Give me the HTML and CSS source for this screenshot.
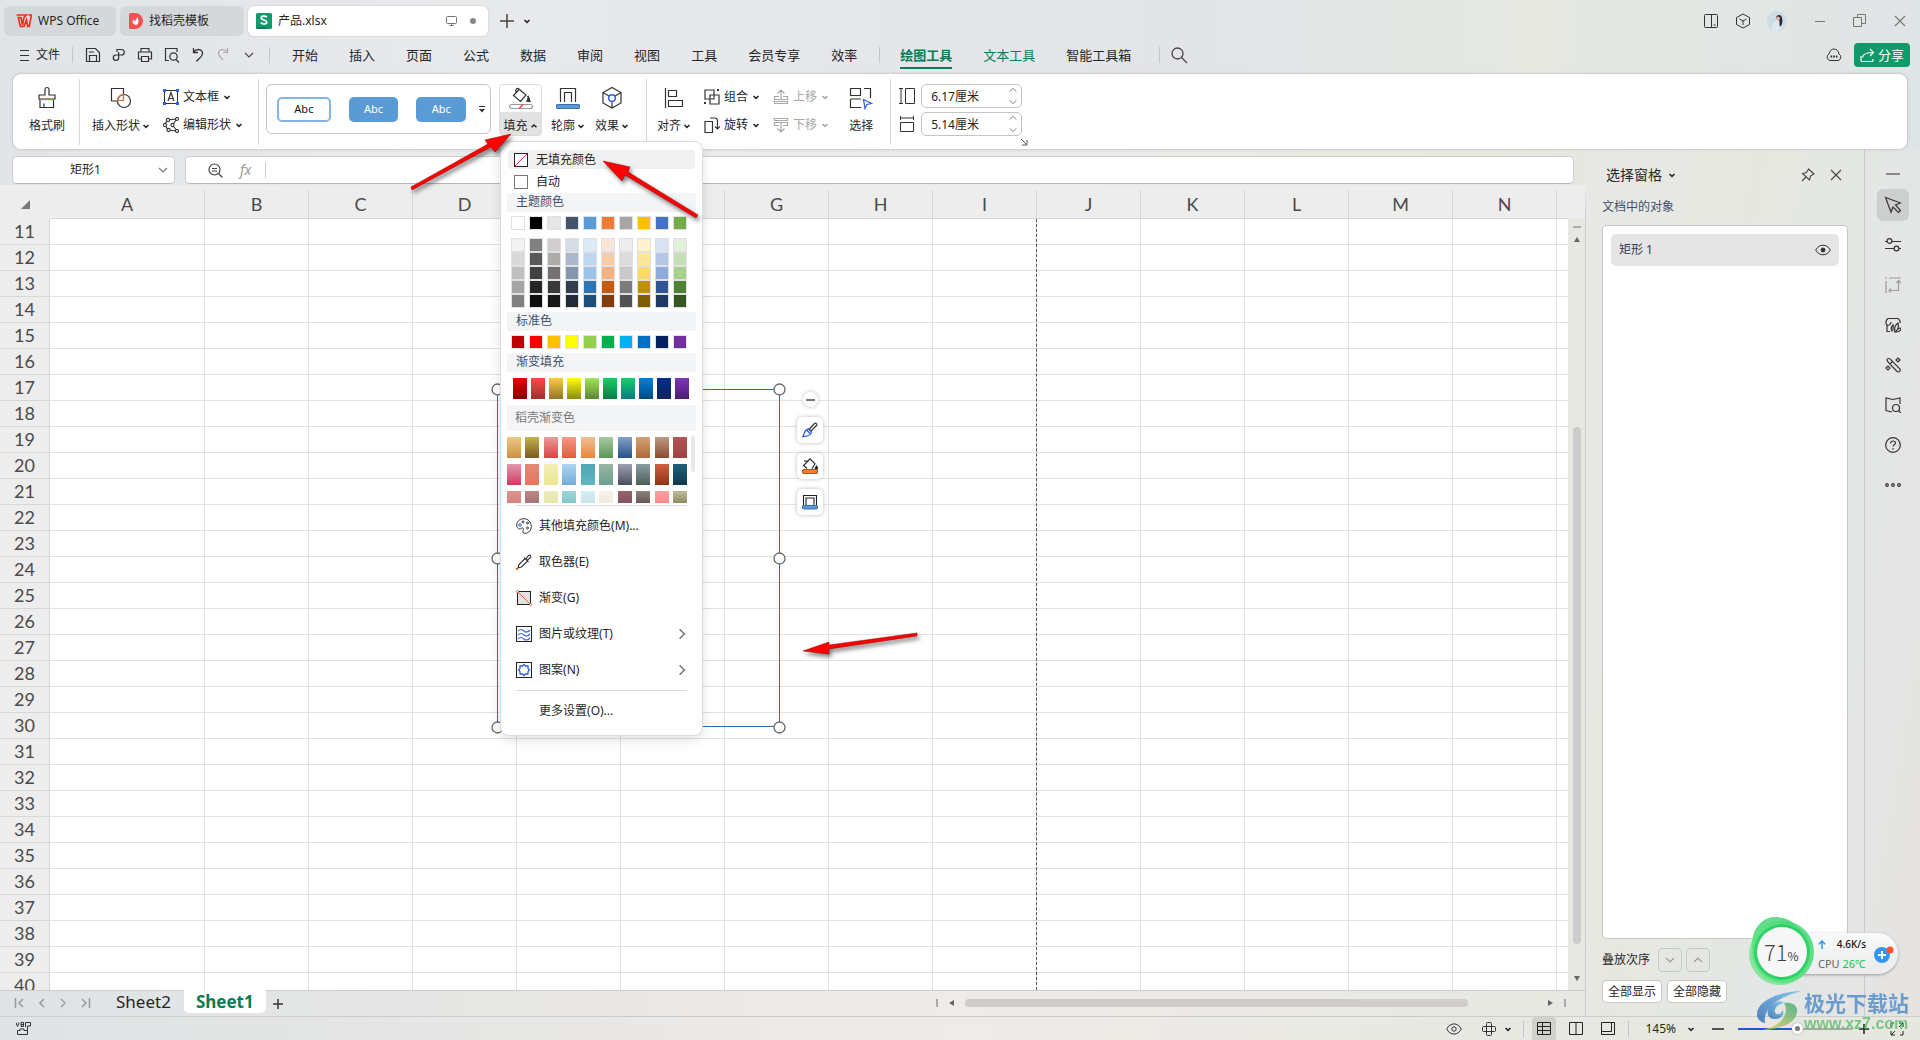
FILE: index.html
```html
<!DOCTYPE html>
<html lang="zh-CN">
<head>
<meta charset="utf-8">
<title>产品.xlsx - WPS Office</title>
<link rel="stylesheet" href="styles.css">
</head>
<body>
<svg class="sprite" aria-hidden="true">
  <symbol id="down" viewBox="0 0 8 8"><path d="M1.5 3 4 5.4 6.500 3" fill="none" stroke="currentColor" stroke-width="1.5"/></symbol>
  <symbol id="up" viewBox="0 0 8 8"><path d="M1.5 5.300 4 3 6.500 5.300" fill="none" stroke="currentColor" stroke-width="1.5"/></symbol>
  <symbol id="wide-down" viewBox="0 0 10 10"><path d="M1 3 5 7 9 3" fill="none" stroke="currentColor" stroke-width="1.1"/></symbol>
  <symbol id="wide-up" viewBox="0 0 10 10"><path d="M1 7 5 3 9 7" fill="none" stroke="currentColor" stroke-width="1.1"/></symbol>
  <symbol id="left" viewBox="0 0 10 10"><path d="M7 1 3 5 7 9" fill="none" stroke="currentColor" stroke-width="1.5"/></symbol>
  <symbol id="right" viewBox="0 0 10 10"><path d="M3 1 7 5 3 9" fill="none" stroke="currentColor" stroke-width="1.3"/></symbol>
  <symbol id="close" viewBox="0 0 12 12"><path d="M1 1 11 11M11 1 1 11" fill="none" stroke="currentColor" stroke-width="1.1"/></symbol>
</svg>

<header class="titlebar">
  <button class="tab tab-home"><svg width="16" height="14" viewBox="0 0 16 14"><path d="M.5 1h10L8 3.500 6.500 11 5 3.500H2.300L4.300 12.500H8L10.500 6l1.200 6.500h1.500L15.500 1h-3" fill="none" stroke="#ee2f1f" stroke-width="1.700"/></svg>WPS Office</button>
  <button class="tab tab-docer"><svg width="14" height="16" viewBox="0 0 14 16"><path d="M1 0h5a8 8 0 0 1 0 16H1a1 1 0 0 1-1-1V1a1 1 0 0 1 1-1z" fill="#f25352"/><path d="M7 12C3 11 3 8 4.500 6.500L6 8.500 8.500 4C10 8 10 11 7 12z" fill="#fff"/></svg>找稻壳模板</button>
  <button class="tab tab-file"><svg width="16" height="16" viewBox="0 0 16 16"><rect width="16" height="16" rx="1.500" fill="#12996a"/><path d="M0 14h11l-2 2H1z" fill="#0b7b54"/><path d="M11 4.200C9 2.400 5 2.900 5.200 5.200 5.400 7.300 10.600 6.700 10.700 9c.1 2.400-4 2.500-6 .6" fill="none" stroke="#fff" stroke-width="1.800"/></svg><span class="grow">产品.xlsx</span>
    <svg width="12" height="12" viewBox="0 0 12 12" fill="none" stroke="#777"><rect x=".5" y="1.500" width="10" height="7" rx="1"/><path d="M5.500 8.500v2M3.500 10.500h4"/></svg><i class="dot"></i></button>
  <button class="plain new-tab" aria-label="新建"><svg width="14" height="14" viewBox="0 0 14 14"><path d="M7 0v14M0 7h14" stroke="#444" stroke-width="1.500"/></svg></button>
  <svg class="i8"><use href="#down"/></svg>
  <div class="window-tools">
    <svg width="16" height="16" viewBox="0 0 16 16" fill="none" stroke="#333"><rect x="1.500" y="1.500" width="13" height="13" rx="1"/><path d="M8.500 2v12M10.500 12h2"/></svg>
    <svg width="16" height="16" viewBox="0 0 16 16" fill="none" stroke="#333"><path d="M8 1l6.500 3.500v7L8 15l-6.500-3.500v-7zM4.500 6 8 8l3.500-2M8 8v4"/></svg>
    <svg width="20" height="20" viewBox="0 0 20 20"><circle cx="10" cy="10" r="10" fill="#cbdde6"/><path d="M5 19c0-6 2-9 5-9 4 0 4 3 5 6-2 4-7 4-10 3z" fill="#dcebf2"/><path d="M9 7c0-4 6-4 6 0 1 4 0 7-2 9-1-2 0-5-1-7z" fill="#2c2833"/><circle cx="11" cy="7.500" r="2" fill="#e5b3a0"/></svg>
    <svg width="10" height="12" viewBox="0 0 10 12"><path d="M0 6.500h10" stroke="#777"/></svg>
    <svg width="13" height="13" viewBox="0 0 13 13" fill="none" stroke="#777"><path d="M.5 3.500h8v9h-8zM4.500 3V.5h8v9H9"/></svg>
    <svg width="12" height="12" color="#777"><use href="#close"/></svg>
  </div>
</header>

<nav class="menubar">
  <button class="plain file-menu"><svg width="9" height="12" viewBox="0 0 9 12"><path d="M0 1.500h9M0 6.500h9M0 11.500h9" stroke="#333"/></svg>文件</button>
  <i class="vline"></i>
  <div class="quick">
    <svg width="16" height="16" viewBox="0 0 16 16" fill="none" stroke="#333" stroke-width="1.200"><path d="M1.500 1.500h9l4 4v9h-13zM4.500 14V8.500h7V14M4 5h5"/></svg>
    <svg width="14" height="16" viewBox="0 0 14 16" fill="none" stroke="#333" stroke-width="1.200"><path d="M5 5V2.500h4.500a2.500 2.500 0 0 1 0 5.500H4a2.700 2.700 0 1 0 2.700 2.700V5"/></svg>
    <svg width="16" height="16" viewBox="0 0 16 16" fill="none" stroke="#333" stroke-width="1.200"><path d="M4 5V1.500h8V5M4 12H1.500V5h13v7H12M4.500 9.500h7v5h-7z"/></svg>
    <svg width="16" height="16" viewBox="0 0 16 16" fill="none" stroke="#333" stroke-width="1.200"><path d="M5 13.500H1.500v-12H13V5"/><circle cx="9.500" cy="9.500" r="3.700"/><path d="M12 12.500 15 15.500"/></svg>
    <svg width="14" height="16" viewBox="0 0 14 16" fill="none" stroke="#333" stroke-width="1.300"><path d="M2.500 1v4.500H7M2.500 5C6 1 11.500 2 11.500 6.500 11.500 10 8 11 5.500 14.500"/></svg>
    <svg width="14" height="16" viewBox="0 0 14 16" fill="none" stroke="#aaa" stroke-width="1.200"><path d="M11.500 1v4.500H7M11.500 5C8 1 2.500 2 2.500 6.500 2.500 9 5 10.500 7 13"/></svg>
    <svg class="quick-more" width="10" height="10" color="#444"><use href="#wide-down"/></svg>
  </div>
  <i class="vline"></i>
  <div class="menus">
    <a href="#">开始</a><a href="#">插入</a><a href="#">页面</a><a href="#">公式</a><a href="#">数据</a><a href="#">审阅</a><a href="#">视图</a><a href="#">工具</a><a href="#">会员专享</a><a href="#">效率</a>
  </div>
  <i class="vline"></i>
  <div class="menus tool-menus"><a href="#" class="current">绘图工具</a><a href="#" class="green">文本工具</a><a href="#">智能工具箱</a></div>
  <i class="vline search-line"></i>
  <svg width="17" height="17" viewBox="0 0 17 17" fill="none" stroke="#444" stroke-width="1.300"><circle cx="6.500" cy="6.500" r="5.500"/><path d="M10.500 10.500 16 16"/></svg>
  <span class="grow"></span>
  <svg width="16" height="14" viewBox="0 0 16 14" fill="none" stroke="#333"><path d="M4 12.500a3.500 3.500 0 0 1-1-6.500C3.500 3 5.500 1 8 1s4.500 2 5 5a3.500 3.500 0 0 1-1 6.500z"/><path d="M4.500 8.500h7" stroke-width="2" stroke-dasharray="1.700 1"/></svg>
  <button class="share"><svg width="15" height="15" viewBox="0 0 15 15" fill="none" stroke="#fff" stroke-width="1.200"><path d="M1 8v4.500a1 1 0 0 0 1 1h10a1 1 0 0 0 1-1V11M2.500 9.500C3 6 6 4.500 13 4.500M10 1l3.500 3.500L10 8"/></svg>分享</button>
</nav>

<section class="ribbon">
  <div class="group g-brush">
    <button class="big"><svg width="22" height="24" viewBox="0 0 22 24" fill="none" stroke="#333" stroke-width="1.200"><path d="M9 9V3.500a2 2 0 0 1 4 0V9h6v4H3V9zM4 13v8.500h13.500V13M8 21.500v-4" /><path d="M4 13.500h14" stroke="#d9692a"/></svg><span>格式刷</span></button>
  </div>
  <div class="group g-shape">
    <button class="big"><svg width="24" height="24" viewBox="0 0 24 24" fill="none" stroke="#333" stroke-width="1.200"><path d="M8 15H2.500V2.500h12V8"/><circle cx="15" cy="15" r="6.500"/><path d="M8.500 14.500h6V8.700A6.500 6.500 0 0 0 8.500 14.500z" stroke="#d9692a"/></svg><span>插入形状<svg class="i8"><use href="#down"/></svg></span></button>
    <div class="stack">
      <button class="small"><svg width="16" height="16" viewBox="0 0 16 16" fill="none" stroke="#333"><path d="M3 1.500h10M3 14.500h10M1.500 3v10M14.500 3v10"/><path d="M5 12 8 3.500 11 12M6 9.500h4" stroke-width="1.200"/><path d="M0 0h3v3H0zM13 0h3v3h-3zM0 13h3v3H0zM13 13h3v3h-3z" fill="#2f5fe0" stroke="none"/></svg><span>文本框<svg class="i8"><use href="#down"/></svg></span></button>
      <button class="small"><svg width="16" height="16" viewBox="0 0 16 16" fill="none" stroke="#333" stroke-width="1.100"><path d="M4 3 14 2 9.500 8 14 14 5 13 2 8z"/><g fill="#fff"><circle cx="5" cy="3" r="1.600"/><circle cx="14" cy="2" r="1.500"/><circle cx="2" cy="8" r="1.600"/><circle cx="9.500" cy="8" r="1.600"/><circle cx="5.500" cy="13" r="1.600"/><circle cx="14" cy="14" r="1.500"/></g></svg><span>编辑形状<svg class="i8"><use href="#down"/></svg></span></button>
    </div>
  </div>
  <div class="group g-style">
    <div class="gallery"><button class="style-btn outline">Abc</button><button class="style-btn">Abc</button><button class="style-btn">Abc</button><svg width="8" height="8" viewBox="0 0 8 8"><path d="M1 1.500h6" stroke="#333"/><path d="M1 4h6L4 7.500z" fill="#333"/></svg></div>
    <div class="fill-wrap">
      <button class="big fill-btn"><svg width="24" height="24" viewBox="0 0 24 24" fill="none" stroke="#333" stroke-width="1.200"><path d="M7 7C6 3 8.500 1 10.500 3.500L17 9l-5.500 6.500-7-6L10 3.500M18.500 10c1.500 2 2 4 1.500 6"/><path d="M19.500 11l1.500 4.500h-3z" fill="#333"/><rect x=".5" y="18.500" width="23" height="4" rx="2" stroke="#999" fill="#fff"/><path d="M10 22.500l4-4" stroke="#e33"/></svg><span>填充<svg class="i8"><use href="#up"/></svg></span></button>
      <div class="popup">
        <button class="row no-fill"><svg width="14" height="14" viewBox="0 0 14 14"><rect x=".5" y=".5" width="13" height="13" fill="#fff" stroke="#222"/><path d="M1 13 13 1" stroke="#d8305a"/></svg>无填充颜色</button>
        <label class="row"><input type="checkbox" class="auto-box">自动</label>
        <h3>主题颜色</h3>
        <div class="swatches theme" id="theme"></div>
        <div class="swatches tints" id="tints"></div>
        <h3>标准色</h3>
        <div class="swatches standard" id="standard"></div>
        <h3>渐变填充</h3>
        <div class="swatches gradients" id="gradients"></div>
        <h3 class="docer-head">稻壳渐变色</h3>
        <div class="docer"><div class="docer-grid" id="docer"></div><i class="docer-thumb"></i></div>
        <hr>
        <button class="item"><svg width="16" height="16" viewBox="0 0 16 16" fill="none" stroke="#333"><path d="M8 .7C3 .7.7 4 .7 7c0 4 3.300 4.500 4.300 3.500 2-1.500 3 0 2 2C6 15 8 15.300 9 15.300c4 0 6.300-3.500 6.300-7C15.300 4 12 .7 8 .7z"/><circle cx="7" cy="4" r="1"/><circle cx="11.500" cy="5" r="1"/><circle cx="11.500" cy="10" r="1"/><circle cx="4" cy="7" r="1.300" stroke="#2f5fe0"/></svg>其他填充颜色(M)...</button>
        <button class="item"><svg width="16" height="16" viewBox="0 0 16 16" fill="none" stroke="#333" stroke-width="1.100"><path d="M9 4.500 3 10.500 2 14 5.500 13 11.500 7M8 3.500l4.500 4.500M10 5l2.500-3.500c1.500-1 3 .5 2 2L11 6.500"/><path d="M0 14h2v2H0z" fill="#d9692a" stroke="none"/></svg>取色器(E)</button>
        <button class="item"><svg width="16" height="16" viewBox="0 0 16 16" fill="none" stroke="#222"><rect x="1.500" y="1.500" width="13" height="13" fill="#e2e2e2"/><path d="M1.500 1.500l13 13" stroke="#d9692a"/><circle cx="1.500" cy="1.500" r="1" stroke="#d9692a" fill="#fff"/><circle cx="14.500" cy="14.500" r="1" stroke="#d9692a" fill="#fff"/></svg>渐变(G)</button>
        <button class="item"><svg width="16" height="16" viewBox="0 0 16 16" fill="none" stroke="#222"><rect x=".5" y=".5" width="15" height="15" /><path d="M2 5c2-2 4-2 6 0s4 1 6-1M2 9c2-2 4-2 6 0s4 1 6-1M2 13c2-2 4-2 6 0s4 1 6-1" stroke="#2f5fe0" stroke-width="1.100"/></svg><span class="grow">图片或纹理(T)</span><svg width="12" height="12" color="#777"><use href="#right"/></svg></button>
        <button class="item"><svg width="16" height="16" viewBox="0 0 16 16" fill="none" stroke="#222"><rect x=".5" y=".5" width="15" height="15" /><path d="M8 2.500 9.500 4H12v2.500L13.500 8 12 9.500V12H9.500L8 13.500 6.500 12H4V9.500L2.500 8 4 6.500V4h2.500z" stroke="#2f5fe0" stroke-width="1.300"/></svg><span class="grow">图案(N)</span><svg width="12" height="12" color="#777"><use href="#right"/></svg></button>
        <hr>
        <button class="item more">更多设置(O)...</button>
      </div>
    </div>
    <button class="big narrow"><svg width="24" height="24" viewBox="0 0 24 24" fill="none" stroke="#333" stroke-width="1.200"><path d="M4.500 16V2.500h15V16M8.500 16V6.500h7V16"/><rect x=".5" y="18.500" width="23" height="4" rx="1.500" fill="#5b9bd5" stroke="#3a6ea5"/></svg><span>轮廓<svg class="i8"><use href="#down"/></svg></span></button>
    <button class="big narrow"><svg width="22" height="24" viewBox="0 0 22 24" fill="none" stroke="#333" stroke-width="1.200"><path d="M11 1.500 20 6.500v10.500l-9 5-9-5V6.500zM2 6.500l6 3.500M20 6.500 14 10M11 16v6"/><circle cx="11" cy="12" r="3.300" stroke="#2f5fe0" stroke-width="1.500"/></svg><span>效果<svg class="i8"><use href="#down"/></svg></span></button>
  </div>
  <div class="group g-arrange">
    <button class="big align"><svg width="20" height="24" viewBox="0 0 20 24" fill="none" stroke="#333" stroke-width="1.200"><path d="M1.500 2v20M4.500 4.500h8v6h-8zM4.500 14.500h14v6h-14z"/></svg><span>对齐<svg class="i8"><use href="#down"/></svg></span></button>
    <div class="stack">
      <button class="small"><svg width="16" height="16" viewBox="0 0 16 16" fill="none" stroke="#333" stroke-width="1.200"><path d="M1 1h9v9H1zM6 6h9v9H6z"/><path d="M13 1h2M1 13v2" stroke-width="2"/></svg><span>组合<svg class="i8"><use href="#down"/></svg></span></button>
      <button class="small"><svg width="16" height="16" viewBox="0 0 16 16" fill="none" stroke="#333" stroke-width="1.200"><path d="M1 4.500h7.500v11H1zM6 1h5c2 0 2.500 1 2.500 3v8M11 9.500l2.500 2.500L16 9.500"/></svg><span>旋转<svg class="i8"><use href="#down"/></svg></span></button>
    </div>
    <div class="stack disabled">
      <button class="small" disabled><svg width="16" height="16" viewBox="0 0 16 16" fill="none" stroke="currentColor" stroke-width="1.200"><path d="M4.500 4.500 8 1l3.500 3.500M8 1v9M6 7.500H1.500v3h13v-3H10M1.500 14.500h13v-2h-13z"/></svg><span>上移<svg class="i8"><use href="#down"/></svg></span></button>
      <button class="small" disabled><svg width="16" height="16" viewBox="0 0 16 16" fill="none" stroke="currentColor" stroke-width="1.200"><path d="M4.500 11.500 8 15l3.500-3.500M8 15V6M6 8.500H1.500v-3h13v3H10M1.500 1.500h13v2h-13z"/></svg><span>下移<svg class="i8"><use href="#down"/></svg></span></button>
    </div>
    <button class="big select-btn"><svg width="24" height="24" viewBox="0 0 24 24" fill="none" stroke="#333" stroke-width="1.200"><path d="M1.500 2.500h10v7h-10zM15 2.500h6.500V12M1.500 13v8.500H12M1.500 13H12"/><path d="M14.500 13.500l8 4-4.500 1-2 4z" stroke="#2f5fe0"/></svg><span>选择</span></button>
  </div>
  <div class="group g-size">
    <label class="size"><svg width="16" height="18" viewBox="0 0 16 18" fill="none" stroke="#333"><path d="M0 1.500h4M0 16.500h4M2 2v14M6.500 1.500h9v15h-9z"/></svg><input type="text" value="6.17厘米" aria-label="高度"><span class="spin"><svg class="i8"><use href="#wide-up"/></svg><svg class="i8"><use href="#wide-down"/></svg></span></label>
    <label class="size"><svg width="16" height="18" viewBox="0 0 16 18" fill="none" stroke="#333"><path d="M1.500 1v4M14.500 1v4M2 3h12M1.500 7.500h13v9h-13z"/></svg><input type="text" value="5.14厘米" aria-label="宽度"><span class="spin"><svg class="i8"><use href="#wide-up"/></svg><svg class="i8"><use href="#wide-down"/></svg></span></label>
  </div>
  <svg class="launcher" width="8" height="8" viewBox="0 0 8 8" fill="none" stroke="#555"><path d="M1 1l5.500 5.500M7 2v5H2"/></svg>
</section>

<main class="work">
  <div class="sheet">
    <div class="formula-bar">
      <div class="name-box"><input type="text" value="矩形1" aria-label="名称框"><svg width="10" height="10" color="#777"><use href="#wide-down"/></svg></div>
      <div class="fx-box"><svg width="15" height="15" viewBox="0 0 15 15" fill="none" stroke="#444" stroke-width="1.200"><circle cx="6.500" cy="6.500" r="5.500"/><path d="M10.500 10.500 14.500 14.500M4 5.500h5M4 8h5"/></svg><em>fx</em><input type="text" aria-label="编辑栏"></div>
    </div>
    <div class="grid-row">
      <div class="grid-area">
        <table class="grid"><colgroup id="cols"></colgroup><thead><tr id="head"><th><svg width="9" height="9" viewBox="0 0 9 9"><path d="M9 0v9H0z" fill="#777"/></svg></th></tr></thead><tbody id="rows"></tbody></table>
        <i class="page-break"></i>
        <svg class="shape" width="296" height="352" viewBox="0 0 296 352"><rect x="7.500" y="7.500" width="282" height="337" fill="none" stroke="#2f6eb5"/><g fill="#fff" stroke="#666" stroke-width="1.300"><circle cx="7.500" cy="7.500" r="5.500"/><circle cx="289.500" cy="7.500" r="5.500"/><circle cx="7.500" cy="176.500" r="5.500"/><circle cx="289.500" cy="176.500" r="5.500"/><circle cx="7.500" cy="345.500" r="5.500"/><circle cx="289.500" cy="345.500" r="5.500"/></g></svg>
        <div class="floaters">
          <button class="fold" aria-label="收起"></button>
          <button aria-label="样式"><svg width="16" height="16" viewBox="0 0 16 16" fill="none" stroke="#333" stroke-width="1.200"><path d="M7 7.500 12.500 1.500c1.500-1 3 .5 2 2L9 9z"/><path d="M6.500 7 9.500 10C9 13 5 14.500.8 14.500 2.500 12 2 8 6.500 7zM4.500 8l3.500 3.500" stroke="#2f5fe0" stroke-width="1.300"/></svg></button>
          <button aria-label="填充"><svg width="16" height="16" viewBox="0 0 16 16" fill="none" stroke="#222" stroke-width="1.100"><path d="M5 10.500 1.500 7.500 8 .8l5 5-3 5M2 3h5"/><path d="M14.500 8l1.500 3h-3z" fill="#222"/><rect x=".5" y="11.500" width="15" height="4" rx="1.500" fill="#ed7d31" stroke="#b5561a"/></svg></button>
          <button aria-label="轮廓"><svg width="16" height="16" viewBox="0 0 16 16" fill="none" stroke="#222" stroke-width="1.100"><path d="M1.500 11V1.500h13V11M4 11V4h8v7"/><rect x=".5" y="11.500" width="15" height="3.500" rx="1.500" fill="#5b9bd5" stroke="#3a6ea5"/></svg></button>
        </div>
      </div>
      <div class="vscroll"><i class="vdash"></i><i class="tri tri-up"></i><i class="vthumb"></i><i class="tri tri-down"></i></div>
    </div>
    <div class="sheet-bar">
      <div class="sheet-nav"><svg width="12" height="10" viewBox="0 0 12 10" fill="none" stroke="#999" stroke-width="1.500"><path d="M1.500 0v10M9 1 5 5l4 4"/></svg><svg width="10" height="10"><use href="#left"/></svg><svg width="10" height="10"><use href="#right"/></svg><svg width="12" height="10" viewBox="0 0 12 10" fill="none" stroke="#999" stroke-width="1.500"><path d="M10.500 0v10M3 1l4 4-4 4"/></svg></div>
      <button class="sheet-tab">Sheet2</button><button class="sheet-tab active">Sheet1</button>
      <button class="plain add-sheet" aria-label="新建工作表"><svg width="10" height="10" viewBox="0 0 10 10"><path d="M5 0v10M0 5h10" stroke="#333" stroke-width="1.500"/></svg></button>
      <div class="hscroll"><i class="bar"></i><i class="tri tri-left"></i><div class="htrack"><i class="hthumb"></i></div><i class="tri tri-right"></i><i class="bar"></i></div>
    </div>
  </div>

  <aside class="panel">
    <div class="panel-head"><h2>选择窗格</h2><svg class="i8"><use href="#down"/></svg><span class="grow"></span>
      <svg width="14" height="14" viewBox="0 0 14 14" fill="none" stroke="#444" stroke-width="1.100"><path d="M7.500 1 13 6 9.500 8 8.500 12 1.500 5.500l4-1zM5 9 1 13"/></svg>
      <svg width="12" height="12" color="#444"><use href="#close"/></svg></div>
    <p class="panel-sub">文档中的对象</p>
    <div class="objects"><button class="object"><span class="grow">矩形 1</span><svg width="16" height="12" viewBox="0 0 16 12" fill="none" stroke="#333"><path d="M.7 6C4-.4 12-.4 15.300 6 12 12.400 4 12.400.7 6z"/><circle cx="8" cy="6" r="2" fill="#333"/></svg></button></div>
    <div class="order"><span>叠放次序</span><button aria-label="下移"><svg width="10" height="10"><use href="#wide-down"/></svg></button><button aria-label="上移"><svg width="10" height="10"><use href="#wide-up"/></svg></button></div>
    <div class="show-all"><button>全部显示</button><button>全部隐藏</button></div>
  </aside>

  <aside class="rail">
    <i class="rail-dash"></i>
    <button class="active" aria-label="选择"><svg width="18" height="18" viewBox="0 0 18 18" fill="none" stroke="#333" stroke-width="1.200"><path d="M1.500 1.500 16.500 7l-5 2 5 5.500-2 2-5.500-5.500-2 5z"/></svg></button>
    <button aria-label="属性"><svg width="16" height="16" viewBox="0 0 16 16" fill="none" stroke="#333" stroke-width="1.200"><path d="M0 4.500h2M7 4.500h9M0 11.500h9M14 11.500h2"/><circle cx="4.500" cy="4" r="2.400"/><circle cx="11.500" cy="11.500" r="2.400"/></svg></button>
    <button aria-label="转换"><svg width="16" height="16" viewBox="0 0 16 16" fill="none" stroke="#999" stroke-width="1.200"><path d="M0 1h2M4 1h12M1 4v12M4 13.500h9.500V4M11.500 6l2-2.500 2.500 2.500M6 11.500l-2 2 2 2.500"/></svg></button>
    <button aria-label="样式库"><svg width="16" height="16" viewBox="0 0 16 16" fill="none" stroke="#333" stroke-width="1.200"><path d="M5 14.500H2V8C0 6 1 3 3 1.500h10c2 1.500 2.500 3 2 4.500M2 8c2 1 4-1 4-3M7 14c-2-3 0-5 1-6 0 2 1 4-1 6zM10 15c-1-4 0-7 3-9 1 4 0 7-3 9zM11 15c1-3 3-4 5-4 0 3-2 4-5 4z"/></svg></button>
    <button aria-label="智能"><svg width="16" height="16" viewBox="0 0 16 16" fill="none" stroke="#333" stroke-width="1.200"><path d="M2 3c0-2 3-2 4 0l9 9c1 2-1 3.500-3 2.500L3 5zM5 7l2-2M1 11l2-2 2 2-2 2zM11 3l2-2 2 2-2 2z"/></svg></button>
    <button aria-label="查阅"><svg width="16" height="16" viewBox="0 0 16 16" fill="none" stroke="#333" stroke-width="1.200"><path d="M8 2.500 1 1v12.500L7 15M8 2.500 15 1v6"/><circle cx="11" cy="11" r="3.500"/><path d="M13.500 13.500 16 16"/></svg></button>
    <button aria-label="帮助"><svg width="16" height="16" viewBox="0 0 16 16" fill="none" stroke="#333" stroke-width="1.200"><circle cx="8" cy="8" r="7.300"/><path d="M5.500 6.500c0-3.500 5-3 5-.5 0 1.500-2.500 2-2.500 3.500M8 11v1.500"/></svg></button>
    <button aria-label="更多"><svg width="16" height="6" viewBox="0 0 16 6" fill="none" stroke="#333" stroke-width="1.200"><circle cx="2" cy="3" r="1.300"/><circle cx="8" cy="3" r="1.300"/><circle cx="14" cy="3" r="1.300"/></svg></button>
  </aside>
</main>

<footer class="status">
  <svg width="15" height="14" viewBox="0 0 15 14" fill="none" stroke="#333"><path d="M0 .5l1.500 4 1.500-4M5 .5v4h2.500v-4H5M5 2.500h2.500M9.500 5V.5h5v3.500h-3v8.500H1.500v-4H4V7h4v1.500h3"/></svg>
  <span class="grow"></span>
  <svg width="16" height="12" viewBox="0 0 16 12" fill="none" stroke="#333"><path d="M.7 6C4-.8 12-.8 15.300 6 12 12.800 4 12.800.7 6z"/><circle cx="8" cy="6" r="2.200"/></svg>
  <svg class="cross" width="14" height="14" viewBox="0 0 14 14" fill="none" stroke="#333"><path d="M4.500 4.500V1.500a1 1 0 0 1 1-1h3a1 1 0 0 1 1 1v3h3a1 1 0 0 1 1 1v3a1 1 0 0 1-1 1h-3v3a1 1 0 0 1-1 1h-3a1 1 0 0 1-1-1v-3h-3a1 1 0 0 1-1-1v-3a1 1 0 0 1 1-1zM4.500 4.500h5v5h-5z"/></svg>
  <svg class="i8"><use href="#down"/></svg>
  <i class="vline"></i>
  <button class="view active" aria-label="普通视图"><svg width="14" height="13" viewBox="0 0 14 13" fill="none" stroke="#222"><path d="M.5.5h13v12H.5zM.5 4.500h13M5.500.5v12M.5 8.500h13"/></svg></button>
  <button class="view" aria-label="分页预览"><svg width="14" height="13" viewBox="0 0 14 13" fill="none" stroke="#222"><path d="M.5.5h13v12H.5zM7 .5v12"/></svg></button>
  <button class="view" aria-label="阅读布局"><svg width="14" height="13" viewBox="0 0 14 13" fill="none" stroke="#222"><path d="M.5.5h13v12H.5zM.5 9.500h10v-9M3 12.500h7"/></svg></button>
  <i class="vline"></i>
  <button class="plain zoom-value">145%<svg class="i8"><use href="#down"/></svg></button>
  <svg class="minus" width="12" height="10" viewBox="0 0 12 10"><path d="M0 5h12" stroke="#222" stroke-width="1.500"/></svg>
  <input type="range" class="zoom" min="0" max="100" value="52" aria-label="缩放">
  <svg width="10" height="10" viewBox="0 0 10 10"><path d="M5 0v10M0 5h10" stroke="#222" stroke-width="1.500"/></svg>
  <svg class="full" width="14" height="14" viewBox="0 0 14 14" fill="none" stroke="#222"><path d="M1 9v4h4M9 1h4v4M13 1 9 5M1 13l4-4M1 5V1h3M13 9v4h-3"/></svg>
</footer>

<svg class="arrows" width="540" height="560" viewBox="400 120 540 560">
  <g fill="#fe0000" stroke="#8a0000" stroke-width=".5">
    <path d="M411 187 488 144 485 140 511 134 495 152 491 147 412 190z"/>
    <path d="M698 215 628 172 630 167 603 161 622 181 625 175 696 218z"/>
    <path d="M917 633 829 645 829 642 803 651 829 654 829 649 917 636z"/>
  </g>
</svg>

<div class="monitor">
  <svg width="66" height="70" viewBox="0 0 66 70"><path d="M4 36C0 18 10 2 25 1c18 0 20 8 28 14z" fill="#63dc8c"/><circle cx="34" cy="36" r="31" fill="#48d878" opacity=".85"/><circle cx="31" cy="38" r="31" fill="#5fe57f" opacity=".7"/><circle cx="33" cy="36" r="28" fill="#2fd266"/><circle cx="33" cy="36" r="25" fill="#f6f7f6"/></svg>
  <div class="percent">71<small>%</small></div>
  <div class="stats"><div><svg width="8" height="9" viewBox="0 0 8 9"><path d="M4 9V1M.8 4.200 4 1l3.200 3.200" fill="none" stroke="#3396f5" stroke-width="1.500"/></svg><b>4.6K/s</b></div><div><span>CPU</span><span class="temp">26℃</span></div></div>
  <svg width="20" height="20" viewBox="0 0 20 20"><circle cx="8" cy="11" r="8" fill="#3396f5"/><path d="M8 7v8M4 11h8" stroke="#fff" stroke-width="2"/><circle cx="16" cy="6" r="3.500" fill="#fa5230"/></svg>
</div>

<div class="watermark">
  <svg width="48" height="42" viewBox="0 0 48 42"><defs><linearGradient id="wb" x1="0" y1="1" x2="1" y2="0"><stop offset="0" stop-color="#1f5fae"/><stop offset="1" stop-color="#63bdf0"/></linearGradient><linearGradient id="wg" x1="0" y1="1" x2="1" y2="0"><stop offset="0" stop-color="#e0d446"/><stop offset="1" stop-color="#2f9e72"/></linearGradient></defs><path d="M46 1C26 1 1 10 1 24c0 6 4 8 8 9C7 20 18 8 46 1z" fill="url(#wb)"/><path d="M24 11C10 14 8 27 17 29c8 1 13-5 9-9 1 4-6 6-7 2-1-5 4-8 9-9z" fill="url(#wb)"/><path d="M28 13c5 9 0 22-21 27 20-1 33-8 34-18C42 15 35 12 28 13z" fill="url(#wg)"/></svg>
  <div><strong>极光下载站</strong><span>www.xz7.com</span></div>
</div>
<script src="app.js"></script>
</body>
</html>
```
FILE: styles.css
```css
* { box-sizing: border-box; }
body {
  margin: 0;
  height: 100vh;
  display: flex;
  flex-direction: column;
  overflow: hidden;
  position: relative;
  font: 12px/16px "Noto Sans", "Noto Sans CJK SC", sans-serif;
  color: #262626;
  background: linear-gradient(90deg, #e1e4e8 0%, #e8e9eb 25%, #e2e4e9 62%, #e6e8e1 80%, #dfe4e6 100%);
}
button, input { font: inherit; color: inherit; }
button { border: 0; background: none; padding: 0; white-space: nowrap; }
svg { flex: none; display: block; }
h2, h3, p { margin: 0; font-weight: 400; }
i { flex: none; display: block; }
.sprite { position: absolute; width: 0; height: 0; }
.i8 { width: 8px; height: 8px; }
.grow { flex: 1; text-align: left; }
.plain { display: flex; align-items: center; }
.vline { width: 1px; height: 16px; background: #c3c5c8; }

.titlebar { display: flex; align-items: center; height: 37px; padding: 5px 14px 1px 4px; }
.tab { display: flex; align-items: center; height: 30px; border-radius: 6px; background: #d5d8db; margin-right: 4px; gap: 6px; }
.tab-home { width: 112px; padding-left: 12px; }
.tab-docer { width: 124px; padding-left: 9px; gap: 6px; }
.tab-file { width: 240px; padding: 0 12px 0 8px; background: #fff; box-shadow: 0 0 2px #b9bcc0; }
.tab-file .dot { width: 6px; height: 6px; border-radius: 3px; background: #888; margin-left: 6px; }
.new-tab { margin: 0 9px 0 8px; }
.window-tools { display: flex; align-items: center; gap: 16px; margin-left: auto; }
.window-tools svg:nth-child(n+4) { margin-left: 12px; }

.menubar { display: flex; align-items: center; height: 37px; padding: 0 10px 1px 20px; }
.file-menu { gap: 7px; margin-right: 12px; }
.quick { display: flex; align-items: center; gap: 11px; margin: 0 15px 0 12px; }
.quick-more { margin-left: 3px; }
.menus { display: flex; gap: 31px; margin: 0 22px; font-size: 13px; line-height: 24px; }
.menus a { color: inherit; text-decoration: none; }
.menus .current { color: #087d55; font-weight: 700; box-shadow: 0 2px 0 #087d55; }
.menus .green { color: #087d55; }
.tool-menus { margin: 0 28px 0 20px; }
.search-line { margin-right: 11px; }
.share { display: flex; align-items: center; gap: 3px; height: 24px; padding: 0 6px; margin-left: 12px; border-radius: 4px; background: #12996a; color: #fff; font-size: 13px; }

.ribbon { display: flex; position: relative; z-index: 3; height: 75px; margin: 0 13px; background: #fff; border-radius: 8px; box-shadow: 0 0 3px #a9acb0; }
.group { display: flex; margin: 5px 0 4px; border-right: 1px solid #d9d9d9; }
.group.g-size { border: 0; }
.big { display: flex; flex-direction: column; align-items: center; height: 52px; margin-top: 5px; padding-top: 1px; gap: 8px; }
.big > svg { margin-top: 1px; }
.big span, .small span { display: flex; align-items: center; gap: 2px; }
.small { display: flex; align-items: center; gap: 4px; height: 24px; }
.small span { gap: 4px; }
.stack { display: flex; flex-direction: column; gap: 4px; margin-top: 6px; }
.g-brush { padding: 0 14px 0 16px; }
.g-shape { padding: 0 15px 0 12px; }
.g-shape .stack { margin-left: 13px; }
.g-style { padding: 0 17px 0 7px; }
.gallery { display: flex; align-items: center; width: 225px; height: 50px; margin: 5px 8px 0 0; padding: 0 4px 0 10px; border: 1px solid #c4c4c4; border-radius: 6px; }
.style-btn { flex: 1; height: 25px; margin-right: 18px; border-radius: 5px; background: #5b9bd5; color: #fff; font-size: 11px; }
.style-btn.outline { background: #fff; border: 2px solid #85b4e0; color: #111; }
.gallery svg { margin-left: -6px; }
.fill-wrap { position: relative; }
.fill-btn { width: 43px; border: 1px solid #dcdcdc; border-radius: 4px; background: linear-gradient(#fff 55%, #e2e2e2 55%); padding-top: 0; }
.narrow { margin-left: 9px; }
.narrow + .narrow { margin-left: 10px; }
.g-arrange { padding: 0 17px 0 10px; }
.align { margin-right: 13px; }
.stack.disabled { margin-left: 13px; margin-right: 20px; color: #a8a8a8; }
.disabled button { color: inherit; }
.g-size { flex-direction: column; gap: 4px; padding: 5px 0 0 8px; }
.size { display: flex; align-items: center; gap: 6px; height: 24px; position: relative; }
.size input { width: 101px; height: 24px; padding: 0 20px 0 9px; border: 1px solid #c4c4c4; border-radius: 5px; }
.spin { position: absolute; right: 5px; top: 2px; display: grid; gap: 4px; color: #666; }
.launcher { align-self: flex-end; margin: 0 0 3px -2px; }

.popup { position: absolute; left: 1px; top: 62px; width: 203px; padding: 8px 6px 6px 7px; background: #fff; border: 1px solid #dcdcdc; border-radius: 9px; box-shadow: 0 4px 12px rgba(0,0,0,.12); }
.row { display: flex; align-items: center; gap: 8px; width: 187px; height: 19px; padding-left: 6px; border-radius: 4px; }
.row.no-fill { background: #f0f0f0; margin-bottom: 3px; }
.auto-box { appearance: none; width: 14px; height: 14px; margin: 0; border: 1px solid #777; background: #fff; }
.popup h3 { height: 19px; margin: 2px 0 4px -1px; padding-left: 9px; background: #f3f4f6; color: #42506b; font-size: 12px; line-height: 18px; }
.swatches { display: grid; grid-template-columns: repeat(10, 14px); gap: 0 4px; padding-left: 3px; }
.swatches b { height: 14px; border: 1px solid #dfe0e3; }
.tints { margin: 8px 0 4px; }
.standard { margin-bottom: 4px; }
.gradients { margin: 6px 0; padding-left: 5px; }
.gradients b, .docer b { height: 21px; border: 0; }
.popup .docer-head { height: 26px; line-height: 26px; color: #777; padding-left: 8px; margin-bottom: 5px; }
.docer { display: flex; justify-content: space-between; height: 67px; overflow: hidden; margin: 0 1px 0 -1px; }
.docer-grid { display: grid; grid-template-columns: repeat(10, 14px); justify-content: space-between; width: 180px; row-gap: 6px; margin-top: 1px; align-content: start; }
.docer-thumb { width: 4px; height: 36px; border-radius: 2px; background: #e8e8e8; }
.popup hr { border: 0; border-top: 1px solid #dcdcdc; margin: 2px 9px 2px 8px; }
.item { display: flex; align-items: center; gap: 7px; width: 100%; height: 36px; padding: 0 8px; }
.item.more { padding-left: 31px; }

.work { flex: 1; min-height: 0; display: flex; background: linear-gradient(100deg, #ebeced 0%, #ebeced 40%, #e8e9e7 75%, #e6e8e0 85%, #e3e6e5 93%, #e6e3e2 100%); }
.sheet { flex: 1; min-width: 0; display: flex; flex-direction: column; }
.formula-bar { display: flex; gap: 10px; padding: 7px 12px 0; height: 36px; background: linear-gradient(90deg, #e2e5e8, #ebeced 40%, #e6e8e0); }
.name-box, .fx-box { display: flex; align-items: center; height: 28px; background: #fff; border: 1px solid #cfcfcf; border-bottom-color: #b5b5b5; border-radius: 5px; }
.name-box { width: 163px; padding-right: 6px; }
.name-box input { flex: 1; min-width: 0; border: 0; background: none; text-align: center; padding: 0; }
.fx-box { flex: 1; padding-left: 22px; }
.fx-box em { margin: 0 14px 0 17px; color: #999; font: italic 14px/16px "Noto Sans", sans-serif; }
.fx-box input { flex: 1; border: 0; border-left: 1px solid #ccc; height: 16px; background: none; }
.grid-row { flex: 1; min-height: 0; display: flex; }
.grid-area { flex: 1; min-width: 0; position: relative; overflow: hidden; background: #ededed; padding-top: 5px; }
.grid { table-layout: fixed; width: 1610px; border-spacing: 0; font: 18px/22px Lato, sans-serif; color: #4a4a4a; }
.grid th { padding: 0 0 2px; height: 26px; font-weight: 400; border: 0 solid #d6d6d6; border-width: 0 1px 1px 0; }
.grid thead th { height: 29px; padding: 0; }
.grid thead th:first-child { border: 0; }
.grid thead svg { margin: 0 auto; }
.grid td { padding: 0; background: #fff; border: 0 solid #e2e2e2; border-width: 0 1px 1px 0; }
.page-break { position: absolute; left: 1036px; top: 34px; bottom: 0; border-left: 1px dashed #555; }
.shape { position: absolute; left: 490px; top: 197px; }
.floaters { position: absolute; left: 797px; top: 207px; display: flex; flex-direction: column; align-items: center; gap: 10px; }
.floaters button { display: grid; place-items: center; width: 26px; height: 26px; border-radius: 5px; background: #fff; box-shadow: 0 0 4px #bbb; }
.floaters .fold { width: 15px; height: 15px; border-radius: 8px; }
.fold::before { content: ""; width: 9px; height: 2px; background: #777; }
.vscroll { display: flex; flex-direction: column; align-items: center; width: 18px; background: #e6e8e1; border-right: 1px solid #ccc; border-top: 34px solid #ededed; padding: 7px 0; }
.vdash { width: 8px; height: 2px; background: #aaa; margin-bottom: 9px; }
.vthumb { width: 8px; height: 517px; border-radius: 4px; background: #cbcccb; margin: 185px 0 auto; }
.tri { width: 0; height: 0; border: 3px solid transparent; }
.tri-up { border-top: 0; border-bottom: 5px solid #666; }
.tri-down { border-bottom: 0; border-top: 5px solid #666; margin-bottom: 2px; }
.tri-left { border-left: 0; border-right: 5px solid #666; }
.tri-right { border-right: 0; border-left: 5px solid #666; }
.sheet-bar { display: flex; align-items: flex-start; height: 26px; border: 0 solid #ccc; border-width: 1px 1px 0 0; background: linear-gradient(90deg, #dfe3e5, #e6e6e5 28%, #f0ebe8 60%, #e6e8e1); }
.sheet-nav { display: flex; gap: 11px; margin: 7px 12px 0 14px; color: #999; }
.sheet-tab { height: 23px; padding: 0 13px; margin-top: -1px; font-size: 17px; line-height: 23px; border-radius: 0 0 5px 5px; }
.sheet-tab.active { background: #fff; color: #087d55; font-weight: 700; padding: 0 12px; }
.add-sheet { margin: 8px 0 0 7px; }
.hscroll { display: flex; align-items: center; gap: 11px; width: 630px; height: 24px; margin: 0 19px 0 auto; }
.bar { width: 2px; height: 8px; background: #aaa; }
.htrack { flex: 1; }
.hthumb { width: 88%; height: 8px; border-radius: 4px; background: #cfccc9; }

.panel { width: 279px; display: flex; flex-direction: column; padding: 13px 16px 13px 16px; border-right: 1px solid #c9cac9; }
.panel-head { display: flex; align-items: center; gap: 6px; height: 26px; padding: 0 6px 0 4px; }
.panel-head h2 { font-size: 14px; }
.panel-head svg:last-child { margin-left: 9px; }
.panel-sub { margin: 11px 0 10px; color: #42506b; }
.objects { flex: 1; background: #fff; border: 1px solid #c4c6c4; border-radius: 4px; padding: 8px; }
.object { display: flex; align-items: center; width: 100%; height: 32px; padding: 0 8px; border-radius: 5px; background: #e5e5e5; }
.object .grow { color: #2c3a58; }
.order { display: flex; align-items: center; gap: 4px; margin: 9px 0 8px; }
.order span { margin-right: 4px; }
.order button { display: grid; place-items: center; width: 24px; height: 24px; border: 1px solid #c8cac6; border-radius: 4px; color: #999; }
.show-all { display: flex; gap: 5px; }
.show-all button { height: 23px; padding: 0 5px; background: #fff; border: 1px solid #c8c8c8; border-radius: 4px; }
.rail { width: 55px; display: flex; flex-direction: column; align-items: center; gap: 8px; padding-top: 24px; }
.rail-dash { width: 14px; height: 2px; background: #888; margin-bottom: 6px; }
.rail button { display: grid; place-items: center; width: 32px; height: 32px; border-radius: 6px; }
.rail .active { background: #cccfce; }

.status { display: flex; align-items: center; height: 24px; padding: 0 16px; border-top: 1px solid #cbcccb; background: linear-gradient(90deg, #dfe3e5, #e6e6e5 24%, #f0ebe8 50%, #e6e8e1 80%, #e6e8e0); }
.cross { margin: 0 8px 0 20px; }
.status .vline { margin: 0 8px 0 11px; }
.status > .vline ~ .vline { margin: 0 16px 0 0; }
.view { display: grid; place-items: center; width: 24px; height: 24px; border-radius: 4px; margin-right: 8px; }
.view.active { background: #cfd1cb; }
.zoom-value { gap: 11px; margin-right: 17px; }
.minus { margin-right: 14px; }
.zoom { appearance: none; width: 114px; height: 12px; margin: 0 7px 0 0; background: linear-gradient(90deg, #2555d9 50%, #aaa 50%) center / 100% 2px no-repeat; }
.zoom::-webkit-slider-thumb { appearance: none; width: 11px; height: 11px; border-radius: 6px; background: #777; border: 3px solid #fff; box-shadow: 0 0 2px #888; }
.full { margin-left: 21px; }

.arrows { position: absolute; left: 400px; top: 120px; z-index: 5; pointer-events: none; filter: drop-shadow(2px 3px 2px rgba(0,0,0,.5)); }
.monitor { position: absolute; right: 22px; bottom: 66px; z-index: 6; display: flex; align-items: center; gap: 8px; width: 116px; height: 41px; padding-left: 36px; border-radius: 0 21px 21px 0; background: linear-gradient(#fafafa, #e9ebec); box-shadow: 0 1px 3px #999; }
.monitor > svg:first-child { position: absolute; left: -33px; top: -17px; }
.percent { position: absolute; left: -18px; top: 3px; font: 300 22px/30px "Noto Sans CJK SC", sans-serif; color: #444; }
.percent small { font-size: 12px; font-weight: 400; }
.stats { font: 11px/19px "Noto Sans", "Noto Sans CJK SC", sans-serif; width: 48px; color: #666; }
.stats div { display: flex; align-items: center; justify-content: space-between; }
.stats b { color: #111; font-size: 10px; font-weight: 500; }
.stats .temp { color: #16c74f; }
.watermark { position: absolute; right: 11px; bottom: 7px; z-index: 7; display: flex; align-items: center; opacity: .75; }
.watermark strong { display: block; font: 700 21px/26px "Noto Sans CJK SC", sans-serif; color: #4184c6; }
.watermark span { display: block; font: 700 16px/18px "Liberation Sans", sans-serif; color: #58b86c; }
```
FILE: app.js
```js
const byId = id => document.getElementById(id);

const columns = 'ABCDEFGHIJKLMNO'.split('');
byId('cols').innerHTML = '<col style="width:50px"><col style="width:155px">' +
  columns.slice(1).map(() => '<col style="width:104px">').join('');
byId('head').insertAdjacentHTML('beforeend', columns.map(c => `<th scope="col">${c === 'O' ? '' : c}</th>`).join(''));
let rows = '';
for (let n = 11; n <= 40; n++) {
  rows += `<tr><th scope="row">${n}</th>${'<td></td>'.repeat(columns.length)}</tr>`;
}
byId('rows').innerHTML = rows;

const paint = (id, list) => {
  byId(id).innerHTML = list.map(c => `<b style="background:${c}"></b>`).join('');
};
const grad = pair => `linear-gradient(${pair.replace('-', ',')})`;

paint('theme', '#fff #000 #e7e6e6 #44546a #5b9bd5 #ed7d31 #a5a5a5 #ffc000 #4472c4 #70ad47'.split(' '));
paint('tints', (
  '#f2f2f2 #808080 #d0cece #d6dce4 #ddebf7 #fbe5d6 #ededed #fff2cc #dae3f3 #e2f0d9 ' +
  '#d9d9d9 #595959 #aeabab #adb9ca #bdd7ee #f8cbad #dbdbdb #ffe699 #b4c7e7 #c5e0b4 ' +
  '#bfbfbf #404040 #767171 #8497b0 #9dc3e6 #f4b183 #c9c9c9 #ffd966 #8faadc #a9d18e ' +
  '#a6a6a6 #262626 #3b3838 #333f50 #2e75b6 #c55a11 #7c7c7c #bf9000 #2f5597 #548235 ' +
  '#808080 #0d0d0d #171717 #222a35 #1f4e79 #843c0c #525252 #7f6000 #203864 #385723').split(' '));
paint('standard', '#c00000 #ff0000 #ffc000 #ffff00 #92d050 #00b050 #00b0f0 #0070c0 #002060 #7030a0'.split(' '));
paint('gradients', ('#e60000-#8a0000 #ff4848-#a03030 #fccb3e-#927526 #ffff10-#8a8a10 #a0e455-#5e8638 ' +
  '#14d068-#0b7b40 #14d068-#0a7a80 #0080d8-#004b84 #002f90-#10235a #8035b8-#4b1c70').split(' ').map(grad));
paint('docer', ('#efc785-#c99245 #c5b24c-#7a5a20 #ed9a9a-#d84545 #f59a85-#e55a3a #f3bd90-#e8873c #a8caa5-#5b9656 ' +
  '#84a2ca-#285088 #d5a273-#b06a3c #bd9a80-#8c4a30 #b45454-#9c4242 ' +
  '#e399ae-#cf3a62 #e48876-#e8745c #f2efb4-#ece690 #aed6ef-#72add6 #4fa5b4-#5fb8c0 #98b8a2-#6aa08c ' +
  '#9ba0b2-#4c4f5e #8a9ca0-#4e5f58 #d06040-#8c3515 #20607a-#0c3850 ' +
  '#de9690-#cf7070 #bb8886-#9b6666 #efecc0-#dfdf9a #9ed6d6-#6cbcbc #d6eef0-#bce0e2 #f7f2e8-#efe4d4 ' +
  '#98606c-#7b4858 #8c8480-#4a3830 #ffa0a0-#ff7878 #c0bc98-#6f6838').split(' ').map(grad));
```
